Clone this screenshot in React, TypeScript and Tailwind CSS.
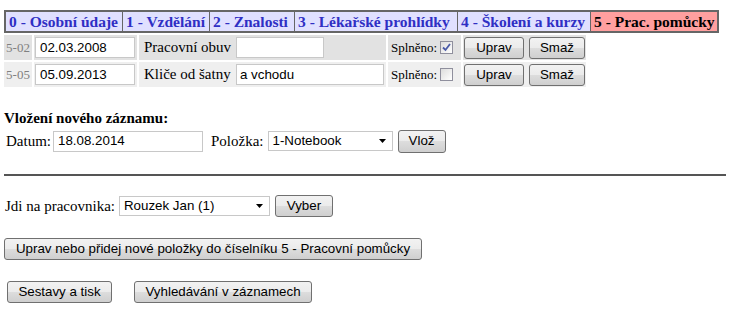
import React from "react";

const serif = "[font-family:'Liberation_Serif','Times_New_Roman',serif]";
const sans = "[font-family:'Liberation_Sans',Arial,sans-serif]";
const btn =
  "rounded-[3px] border border-[#707070] bg-[linear-gradient(to_bottom,#f2f2f2_0%,#ebebeb_50%,#dddddd_50%,#cfcfcf_100%)] text-black leading-none flex items-center justify-center";

// widths taken from the reference tab strip (left border included)
const tabs = [
  { label: "0 - Osobní údaje", w: "w-[116px]" },
  { label: "1 - Vzdělání", w: "w-[87px]" },
  { label: "2 - Znalosti", w: "w-[85px]" },
  { label: "3 - Lékařské prohlídky", w: "w-[163px]" },
  { label: "4 - Školení a kurzy", w: "w-[133px]" },
  { label: "5 - Prac. pomůcky", w: "flex-1" },
];

const records = [
  { code: "5-02", date: "02.03.2008", item: "Pracovní obuv", note: "", noteW: "w-[88px]", done: true, bg: "bg-[#e2e2e2]" },
  { code: "5-05", date: "05.09.2013", item: "Kliče od šatny", note: "a vchodu", noteW: "w-[148px]", done: false, bg: "bg-[#efefef]" },
];

function Checkbox({ checked }: { checked: boolean }) {
  return (
    <span className="inline-flex h-[13px] w-[13px] items-center justify-center border border-[#8f8f9d] bg-[linear-gradient(135deg,#dcdcdc,#ffffff)]">
      {checked && (
        <svg width="11" height="11" viewBox="0 0 11 11">
          <path d="M2 5.5 L4.5 8 L9 2" fill="none" stroke="#4a5aa8" strokeWidth="1.8" />
        </svg>
      )}
    </span>
  );
}

function Select({ value, w }: { value: string; w: string }) {
  return (
    <div className={`${w} ${sans} flex h-[20px] items-center justify-between border border-[#c8c8c8] bg-white pl-[4px] pr-[6px] text-[13.33px] text-black`}>
      <span>{value}</span>
      <svg width="7" height="4" viewBox="0 0 7 4">
        <path d="M0 0 H7 L3.5 4 Z" fill="#000" />
      </svg>
    </div>
  );
}

export default function App() {
  return (
    <div className={`${serif} h-[310px] w-[729px] overflow-hidden bg-white pl-[4px] pt-[10px] text-[15px] text-black`}>
      <div className="flex w-[715px] border-2 border-[#666] bg-[#e0e0ff]">
        {tabs.map((t, i) => (
          <div
            key={t.label}
            className={`${t.w} flex h-[19px] items-center whitespace-nowrap pl-[3px] text-[15.5px] font-bold ${
              i > 0 ? "border-l border-[#666]" : ""
            } ${i === tabs.length - 1 ? "bg-[#ff9f9f] text-black" : "text-[#2f2fc4]"}`}
          >
            {t.label}
          </div>
        ))}
      </div>

      <div className="mt-[2px] flex flex-col gap-[2px]">
        {records.map((r) => (
          <div key={r.code} className="flex h-[25px] gap-[2px]">
            <div className={`${r.bg} flex w-[28px] items-center justify-center text-[13px] text-[#808080]`}>{r.code}</div>
            <div className={`${r.bg} flex w-[103px] items-center pl-[1px]`}>
              <div className={`${sans} flex h-[21px] w-[100px] items-center border border-[#c8c8c8] bg-white pl-[4px] text-[13.33px]`}>
                {r.date}
              </div>
            </div>
            <div className={`${r.bg} flex w-[247px] items-center gap-[4px] pl-[5px]`}>
              <span className="w-[88px] whitespace-nowrap">{r.item}</span>
              <div className={`${sans} ${r.noteW} flex h-[21px] items-center border border-[#c8c8c8] bg-white pl-[3px] text-[13.33px]`}>
                {r.note}
              </div>
            </div>
            <div className={`${r.bg} flex w-[73px] items-center gap-[3px] pl-[3px] text-[13px]`}>
              <span>Splněno:</span>
              <Checkbox checked={r.done} />
            </div>
            <div className={`${r.bg} flex w-[123px] items-center gap-[5px] pl-[1px]`}>
              <button className={`${btn} ${sans} h-[22px] w-[60px] text-[13.33px]`}>Uprav</button>
              <button className={`${btn} ${sans} h-[22px] w-[56px] text-[13.33px]`}>Smaž</button>
            </div>
          </div>
        ))}
      </div>

      <div className="mt-[21px] font-bold leading-[20px]">Vložení nového záznamu:</div>
      <div className="mt-[1px] flex h-[24px] items-center pl-[2px]">
        <span>Datum:</span>
        <div className={`${sans} ml-[2px] flex h-[21px] w-[150px] items-center border border-[#c8c8c8] bg-white pl-[4px] text-[13.33px]`}>
          18.08.2014
        </div>
        <span className="ml-[8px]">Položka:</span>
        <div className="ml-[4px]">
          <Select value="1-Notebook" w="w-[125px]" />
        </div>
        <button className={`${btn} ${sans} ml-[5px] h-[23px] w-[48px] text-[13.33px]`}>Vlož</button>
      </div>

      <div className="mt-[21px] h-[2px] w-[722px] bg-[#555]" />

      <div className="mt-[18px] flex h-[24px] items-center pl-[1px]">
        <span>Jdi na pracovnika:</span>
        <div className="ml-[4px]">
          <Select value="Rouzek Jan (1)" w="w-[151px]" />
        </div>
        <button className={`${btn} ${sans} ml-[5px] h-[22px] w-[58px] text-[13.33px]`}>Vyber</button>
      </div>

      <button className={`${btn} ${sans} mt-[20px] h-[22px] w-[418px] text-[13.33px]`}>
        Uprav nebo přidej nové položky do číselníku 5 - Pracovní pomůcky
      </button>

      <div className="mt-[21px] flex pl-[3px]">
        <button className={`${btn} ${sans} h-[22px] w-[105px] text-[13.33px]`}>Sestavy a tisk</button>
        <button className={`${btn} ${sans} ml-[22px] h-[22px] w-[178px] text-[13.33px]`}>Vyhledávání v záznamech</button>
      </div>
    </div>
  );
}
